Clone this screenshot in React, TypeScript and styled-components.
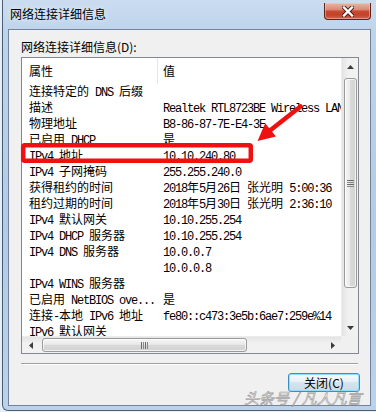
import React from "react";
import styled, { createGlobalStyle } from "styled-components";

const GlobalStyle = createGlobalStyle`
  html, body { margin: 0; padding: 0; }
  body {
    width: 376px;
    height: 412px;
    overflow: hidden;
    background: #e4eef8;
    font-family: "Noto Sans CJK SC", "Noto Sans", sans-serif;
  }
`;

const Stage = styled.div`
  position: relative;
  width: 376px;
  height: 412px;
  overflow: hidden;
  background: #e4eef8;
`;

const Frame = styled.div`
  margin-left: 2px;
  width: 374px;
  height: 411px;
  box-sizing: border-box;
  border-left: 1px solid rgba(38, 52, 72, 0.75);
  border-bottom: 1px solid rgba(38, 52, 72, 0.75);
  border-bottom-left-radius: 6px;
  background: linear-gradient(180deg, #cadcf0 0%, #bed4eb 8%, #b3cbe5 55%, #bcd2ea 100%);
  padding-left: 5px;
  display: flex;
  flex-direction: column;
`;

const TitleBar = styled.div`
  height: 29px;
  display: flex;
  justify-content: space-between;
  align-items: flex-start;
`;

const TitleText = styled.div`
  padding-left: 2px;
  line-height: 28px;
  font-size: 12px;
  color: #000;
  text-shadow: 0 0 6px rgba(255, 255, 255, 0.9);
`;

const CloseButton = styled.div`
  margin-top: 3px;
  margin-right: 5px;
  width: 47px;
  height: 17px;
  box-sizing: border-box;
  border: 1px solid #5a2419;
  border-top: none;
  border-radius: 0 0 4px 4px;
  background: linear-gradient(180deg, #eab3a6 0%, #dd8b78 40%, #c74a33 52%, #c4412a 75%, #d7664c 100%);
  box-shadow: inset 0 0 0 1px rgba(255, 210, 200, 0.45);
  display: flex;
  align-items: center;
  justify-content: center;
`;

const Client = styled.div`
  width: 363px;
  height: 377px;
  box-sizing: border-box;
  border: 1px solid #71849c;
  background: #f0f0f0;
  padding: 9px 11px 0 12px;
  display: flex;
  flex-direction: column;
`;

const Label = styled.div`
  height: 16px;
  line-height: 16px;
  font-size: 12px;
  color: #000;
  margin-bottom: 2px;
`;

const ListView = styled.div`
  height: 297px;
  box-sizing: border-box;
  border: 1px solid #828790;
  background: #fff;
  display: grid;
  grid-template-columns: 1fr 17px;
  grid-template-rows: 1fr 17px;
`;

const Content = styled.div`
  overflow: hidden;
  min-width: 0;
`;

const Header = styled.div`
  height: 25px;
  display: grid;
  grid-template-columns: 136px 1fr;
  background: #fff;
`;

const HeaderCell = styled.div<{ $sep?: boolean }>`
  padding-left: ${(p) => (p.$sep ? 7 : 5)}px;
  line-height: 26px;
  font-size: 12px;
  color: #000;
  border-right: ${(p) => (p.$sep ? "1px solid #e2e5ea" : "none")};
`;

const Row = styled.div`
  height: 16px;
  display: grid;
  grid-template-columns: 135px auto;
  line-height: 16px;
  font-size: 12px;
  color: #000;
  white-space: nowrap;
`;

const NameCell = styled.div`
  padding-left: 7px;
  overflow: hidden;
`;

const ValueCell = styled.div`
  padding-left: 6px;
`;

const Han = styled.span`
  font-family: "Noto Sans CJK SC", sans-serif;
  font-size: 12px;
`;

const Latin = styled.span`
  font-family: "Liberation Mono", monospace;
  font-size: 12px;
  letter-spacing: -1.2px;
  white-space: pre;
`;

const VScroll = styled.div`
  display: flex;
  flex-direction: column;
  background: linear-gradient(90deg, #e4e4e4 0%, #f1f1f1 40%, #f1f1f1 100%);
  border-left: 1px solid #ececec;
  box-sizing: border-box;
`;

const HScroll = styled.div`
  display: flex;
  background: linear-gradient(180deg, #e4e4e4 0%, #f1f1f1 40%, #f1f1f1 100%);
  border-top: 1px solid #ececec;
  box-sizing: border-box;
`;

const ScrollButton = styled.div`
  flex: 0 0 17px;
  width: 17px;
  height: 17px;
  display: flex;
  align-items: center;
  justify-content: center;
`;

const Track = styled.div<{ $horizontal?: boolean }>`
  flex: 1;
  display: flex;
  flex-direction: ${(p) => (p.$horizontal ? "row" : "column")};
  padding: ${(p) => (p.$horizontal ? "1px 0 1px 3px" : "3px 1px 0 2px")};
`;

const Thumb = styled.div<{ $horizontal?: boolean }>`
  box-sizing: border-box;
  border: 1px solid #9a9a9a;
  border-radius: 3px;
  background: ${(p) =>
    p.$horizontal
      ? "linear-gradient(180deg, #f6f6f6 0%, #e9e9e9 45%, #d9d9d9 50%, #d2d2d2 100%)"
      : "linear-gradient(90deg, #f6f6f6 0%, #e9e9e9 45%, #d9d9d9 50%, #d2d2d2 100%)"};
  box-shadow: inset 0 0 0 1px rgba(255, 255, 255, 0.7);
  display: flex;
  align-items: center;
  justify-content: center;
`;

const Corner = styled.div`
  background: #f0f0f0;
`;

const Separator = styled.div`
  margin-top: 9px;
  height: 1px;
  margin-right: 1px;
  background: #a0a0a0;
  border-bottom: 1px solid #fff;
`;

const ButtonRow = styled.div`
  margin-top: 8px;
  display: flex;
  justify-content: flex-end;
  margin-right: -1px;
`;

const DialogButton = styled.div`
  width: 72px;
  height: 19px;
  box-sizing: border-box;
  border: 1px solid #3c8fc4;
  border-radius: 3px;
  background: linear-gradient(180deg, #f4f9fc 0%, #e9f1f6 45%, #d6e5ef 50%, #c9dce9 100%);
  box-shadow: inset 0 0 0 1px #8fdcfb;
  display: flex;
  align-items: center;
  justify-content: center;
  font-size: 12px;
  line-height: 17px;
  color: #000;
`;

const Watermark = styled.div`
  position: absolute;
  left: 244px;
  top: 388px;
  font-family: "Noto Sans CJK SC", sans-serif;
  font-size: 15px;
  font-style: italic;
  line-height: 20px;
  color: rgba(255, 255, 255, 0.55);
  -webkit-text-stroke: 0.7px rgba(140, 140, 140, 0.8);
  white-space: pre;
  pointer-events: none;
`;

const Annotation = styled.svg`
  position: absolute;
  left: 0;
  top: 0;
  pointer-events: none;
`;

const CJK = /([\u2e80-\u9fff\uf900-\ufaff\uff00-\uffef\u3000-\u303f]+)/;

function Mixed({ text }: { text: string }) {
  const parts = text.split(CJK).filter((p) => p.length > 0);
  return (
    <>
      {parts.map((p, i) =>
        CJK.test(p) ? <Han key={i}>{p}</Han> : <Latin key={i}>{p}</Latin>
      )}
    </>
  );
}

function Arrow({ dir }: { dir: "up" | "down" | "left" | "right" }) {
  const pts: Record<string, string> = {
    up: "0,4 3.5,0 7,4",
    down: "0,0 3.5,4 7,0",
    left: "4,0 0,3.5 4,7",
    right: "0,0 4,3.5 0,7",
  };
  const vertical = dir === "up" || dir === "down";
  return (
    <svg width={vertical ? 7 : 4} height={vertical ? 4 : 7} viewBox={vertical ? "0 0 7 4" : "0 0 4 7"}>
      <polygon points={pts[dir]} fill="#3c3c3c" />
    </svg>
  );
}

function Grip({ horizontal }: { horizontal?: boolean }) {
  if (horizontal) {
    return (
      <svg width="7" height="7" viewBox="0 0 7 7">
        {[0, 2, 4, 6].map((x) => (
          <rect key={x} x={x} y="0" width="1" height="7" fill={x % 4 === 0 ? "#6a6a6a" : "#8a8a8a"} />
        ))}
      </svg>
    );
  }
  return (
    <svg width="7" height="7" viewBox="0 0 7 7">
      {[0, 2, 4, 6].map((y) => (
        <rect key={y} x="0" y={y} width="7" height="1" fill={y % 4 === 0 ? "#6a6a6a" : "#8a8a8a"} />
      ))}
    </svg>
  );
}

const rows: [string, string][] = [
  ["连接特定的 DNS 后缀", ""],
  ["描述", "Realtek RTL8723BE Wireless LAN 802.11n PCI-E NIC"],
  ["物理地址", "B8-86-87-7E-E4-3E"],
  ["已启用 DHCP", "是"],
  ["IPv4 地址", "10.10.240.80"],
  ["IPv4 子网掩码", "255.255.240.0"],
  ["获得租约的时间", "2018年5月26日 张光明 5:00:36"],
  ["租约过期的时间", "2018年5月30日 张光明 2:36:10"],
  ["IPv4 默认网关", "10.10.255.254"],
  ["IPv4 DHCP 服务器", "10.10.255.254"],
  ["IPv4 DNS 服务器", "10.0.0.7"],
  ["", "10.0.0.8"],
  ["IPv4 WINS 服务器", ""],
  ["已启用 NetBIOS ove...", "是"],
  ["连接-本地 IPv6 地址", "fe80::c473:3e5b:6ae7:259e%14"],
  ["IPv6 默认网关", ""],
  ["IPv6 DNS 服务器", ""],
];

export default function App() {
  return (
    <Stage>
      <GlobalStyle />
      <Frame>
        <TitleBar>
          <TitleText>网络连接详细信息</TitleText>
          <CloseButton>
            <svg width="12" height="11" viewBox="0 0 12 11">
              <path d="M2 1.5 L10 9.5 M10 1.5 L2 9.5" stroke="#4a1a12" strokeWidth="4.2" strokeLinecap="square" />
              <path d="M2 1.5 L10 9.5 M10 1.5 L2 9.5" stroke="#ffffff" strokeWidth="2.4" strokeLinecap="square" />
            </svg>
          </CloseButton>
        </TitleBar>
        <Client>
          <Label>网络连接详细信息(D):</Label>
          <ListView>
            <Content>
              <Header>
                <HeaderCell $sep>属性</HeaderCell>
                <HeaderCell>值</HeaderCell>
              </Header>
              {rows.map(([name, value], i) => (
                <Row key={i}>
                  <NameCell>
                    <Mixed text={name} />
                  </NameCell>
                  <ValueCell>
                    <Mixed text={value} />
                  </ValueCell>
                </Row>
              ))}
            </Content>
            <VScroll>
              <ScrollButton>
                <Arrow dir="up" />
              </ScrollButton>
              <Track>
                <Thumb style={{ height: 210 }}>
                  <Grip />
                </Thumb>
              </Track>
              <ScrollButton>
                <Arrow dir="down" />
              </ScrollButton>
            </VScroll>
            <HScroll>
              <ScrollButton>
                <Arrow dir="left" />
              </ScrollButton>
              <Track $horizontal>
                <Thumb $horizontal style={{ width: 205 }}>
                  <Grip horizontal />
                </Thumb>
              </Track>
              <ScrollButton>
                <Arrow dir="right" />
              </ScrollButton>
            </HScroll>
            <Corner />
          </ListView>
          <Separator />
          <ButtonRow>
            <DialogButton>关闭(C)</DialogButton>
          </ButtonRow>
        </Client>
      </Frame>
      <Watermark>头条号 / 凡人凡言</Watermark>
      <Annotation width="376" height="412" viewBox="0 0 376 412">
        <rect x="23.2" y="145.2" width="227.6" height="15.6" rx="1.5" fill="none" stroke="#f01010" strokeWidth="4.5" />
        <line x1="300.5" y1="106.5" x2="270" y2="130.5" stroke="#f01010" strokeWidth="4.5" strokeLinecap="round" />
        <polygon points="257.5,141 265.2,123.2 276,136.6" fill="#f01010" />
      </Annotation>
    </Stage>
  );
}
